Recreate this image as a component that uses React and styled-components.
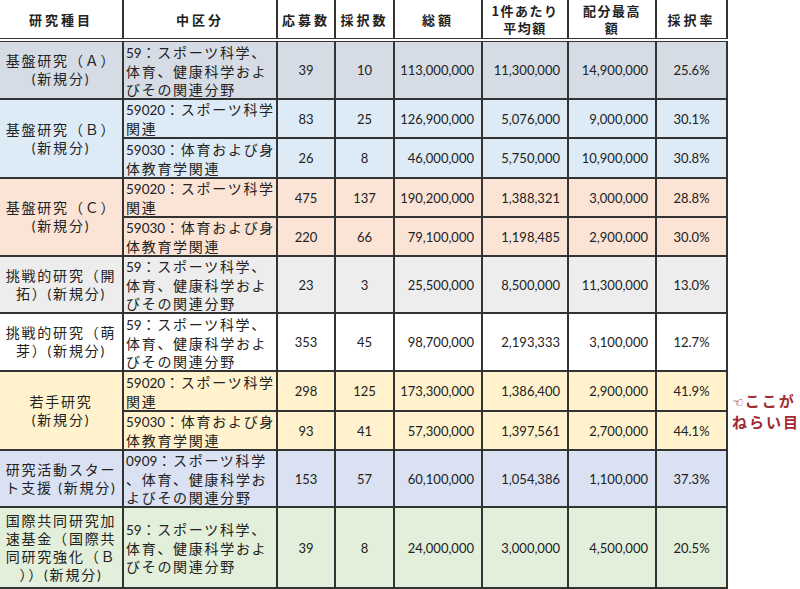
import React from "react";
import styled, { createGlobalStyle } from "styled-components";

const GlobalStyle = createGlobalStyle`
  html, body {
    margin: 0;
    padding: 0;
    background: #ffffff;
  }
  body {
    font-family: Lato, "Noto Sans CJK JP", sans-serif;
    color: #222;
  }
`;

const Page = styled.div`
  width: 800px;
  height: 589px;
  overflow: hidden;
`;

const Table = styled.table`
  border-collapse: collapse;
  table-layout: fixed;
  width: 800px;
`;

const HeadCell = styled.th`
  height: 38px;
  padding: 0;
  border-left: 2px solid #333;
  border-bottom: 4px double #333;
  font-family: "Noto Sans CJK JP", sans-serif;
  font-weight: 700;
  font-size: 13px;
  letter-spacing: ${(p) => (p.$tight ? "1.5px" : "3px")};
  line-height: 17px;
  color: #222;
  text-align: center;
  vertical-align: middle;
  background: #fff;
  overflow: hidden;

  &:first-child {
    border-left: none;
  }
  &:nth-child(8) {
    border-right: 2px solid #333;
  }
`;

const Row = styled.tr`
  height: ${(p) => p.$h}px;
`;

const Cell = styled.td`
  padding: 0;
  border: 2px solid #333;
  background: ${(p) => p.$bg};
  vertical-align: middle;
  white-space: nowrap;
  overflow: hidden;
  color: #222;
`;

const KindCell = styled(Cell)`
  border-left: none;
  text-align: center;
  font-family: Lato, "Noto Sans CJK JP", sans-serif;
  font-size: 14px;
  letter-spacing: 1.8px;
  line-height: 18px;
`;

const FieldCell = styled(Cell)`
  padding-left: 2px;
  text-align: left;
  font-family: "Noto Sans CJK JP", sans-serif;
  font-size: 14px;
  letter-spacing: 1.7px;
  line-height: 18px;
`;

const Digits = styled.span`
  font-family: Lato, sans-serif;
  font-size: 13.5px;
  letter-spacing: 0;
`;

const NumCell = styled(Cell)`
  font-family: Lato, sans-serif;
  font-size: 13px;
  text-align: ${(p) => (p.$right ? "right" : "center")};
  padding-right: ${(p) => (p.$right ? "7px" : "0")};
`;

const NoteCell = styled.td`
  border: none;
  padding: 0 0 0 4px;
  vertical-align: middle;
  white-space: nowrap;
`;

const Note = styled.div`
  font-family: "Noto Sans CJK JP", sans-serif;
  font-weight: 700;
  font-size: 15px;
  line-height: 19px;
  letter-spacing: 2px;
  color: #a12a33;
`;

const Hand = styled.span`
  font-family: "DejaVu Sans", sans-serif;
  font-weight: 400;
  font-size: 13px;
  letter-spacing: 0;
  margin-right: 1px;
`;

const renderLine = (l) => {
  const m = l.match(/^(\d+)(.*)$/);
  if (!m) return l;
  return (
    <>
      <Digits>{m[1]}</Digits>
      {m[2]}
    </>
  );
};

const Lines = ({ lines }) =>
  lines.map((l, i) => (
    <React.Fragment key={i}>
      {i > 0 && <br />}
      {renderLine(l)}
    </React.Fragment>
  ));

const field59 = ["59：スポーツ科学、", "体育、健康科学およ", "びその関連分野"];
const field020 = ["59020：スポーツ科学", "関連"];
const field030 = ["59030：体育および身", "体教育学関連"];

const groups = [
  {
    bg: "#d6dce5",
    kind: ["基盤研究（Ａ）", "(新規分)"],
    subs: [{ h: 59, field: field59, n: ["39", "10", "113,000,000", "11,300,000", "14,900,000", "25.6%"] }],
  },
  {
    bg: "#ddebf7",
    kind: ["基盤研究（Ｂ）", "(新規分)"],
    subs: [
      { h: 39, field: field020, n: ["83", "25", "126,900,000", "5,076,000", "9,000,000", "30.1%"] },
      { h: 40, field: field030, n: ["26", "8", "46,000,000", "5,750,000", "10,900,000", "30.8%"] },
    ],
  },
  {
    bg: "#fbe4d6",
    kind: ["基盤研究（Ｃ）", "(新規分)"],
    subs: [
      { h: 39, field: field020, n: ["475", "137", "190,200,000", "1,388,321", "3,000,000", "28.8%"] },
      { h: 39, field: field030, n: ["220", "66", "79,100,000", "1,198,485", "2,900,000", "30.0%"] },
    ],
  },
  {
    bg: "#ededed",
    kind: ["挑戦的研究（開", "拓）(新規分)"],
    subs: [{ h: 57, field: field59, n: ["23", "3", "25,500,000", "8,500,000", "11,300,000", "13.0%"] }],
  },
  {
    bg: "#ffffff",
    kind: ["挑戦的研究（萌", "芽）(新規分)"],
    subs: [{ h: 58, field: field59, n: ["353", "45", "98,700,000", "2,193,333", "3,100,000", "12.7%"] }],
  },
  {
    bg: "#fff2cc",
    kind: ["若手研究", "(新規分)"],
    note: true,
    subs: [
      { h: 40, field: field020, n: ["298", "125", "173,300,000", "1,386,400", "2,900,000", "41.9%"] },
      { h: 39, field: field030, n: ["93", "41", "57,300,000", "1,397,561", "2,700,000", "44.1%"] },
    ],
  },
  {
    bg: "#d9e1f2",
    kind: ["研究活動スター", "ト支援 (新規分)"],
    subs: [
      {
        h: 57,
        field: ["0909：スポーツ科学", "、体育、健康科学お", "よびその関連分野"],
        n: ["153", "57", "60,100,000", "1,054,386", "1,100,000", "37.3%"],
      },
    ],
  },
  {
    bg: "#e2efda",
    kind: ["国際共同研究加", "速基金（国際共", "同研究強化（Ｂ", "））(新規分)"],
    subs: [{ h: 81, field: field59, n: ["39", "8", "24,000,000", "3,000,000", "4,500,000", "20.5%"] }],
  },
];

const widths = [123, 154, 58, 59, 88, 86, 88, 71, 73];

export default function App() {
  return (
    <Page>
      <GlobalStyle />
      <Table>
        <colgroup>
          {widths.map((w, i) => (
            <col key={i} style={{ width: w }} />
          ))}
        </colgroup>
        <thead>
          <tr>
            <HeadCell>研究種目</HeadCell>
            <HeadCell>中区分</HeadCell>
            <HeadCell>応募数</HeadCell>
            <HeadCell>採択数</HeadCell>
            <HeadCell>総額</HeadCell>
            <HeadCell $tight>
              1件あたり
              <br />
              平均額
            </HeadCell>
            <HeadCell $tight>
              配分最高
              <br />
              額
            </HeadCell>
            <HeadCell>採択率</HeadCell>
          </tr>
        </thead>
        <tbody>
          {groups.map((g, gi) =>
            g.subs.map((s, si) => (
              <Row key={`${gi}-${si}`} $h={s.h}>
                {si === 0 && (
                  <KindCell $bg={g.bg} rowSpan={g.subs.length}>
                    <Lines lines={g.kind} />
                  </KindCell>
                )}
                <FieldCell $bg={g.bg}>
                  <Lines lines={s.field} />
                </FieldCell>
                {s.n.map((v, ni) => (
                  <NumCell key={ni} $bg={g.bg} $right={ni >= 2 && ni <= 4}>
                    {v}
                  </NumCell>
                ))}
                {g.note && si === 0 && (
                  <NoteCell rowSpan={2}>
                    <Note>
                      <Hand>☜</Hand>ここが
                      <br />
                      ねらい目
                    </Note>
                  </NoteCell>
                )}
              </Row>
            ))
          )}
        </tbody>
      </Table>
    </Page>
  );
}
